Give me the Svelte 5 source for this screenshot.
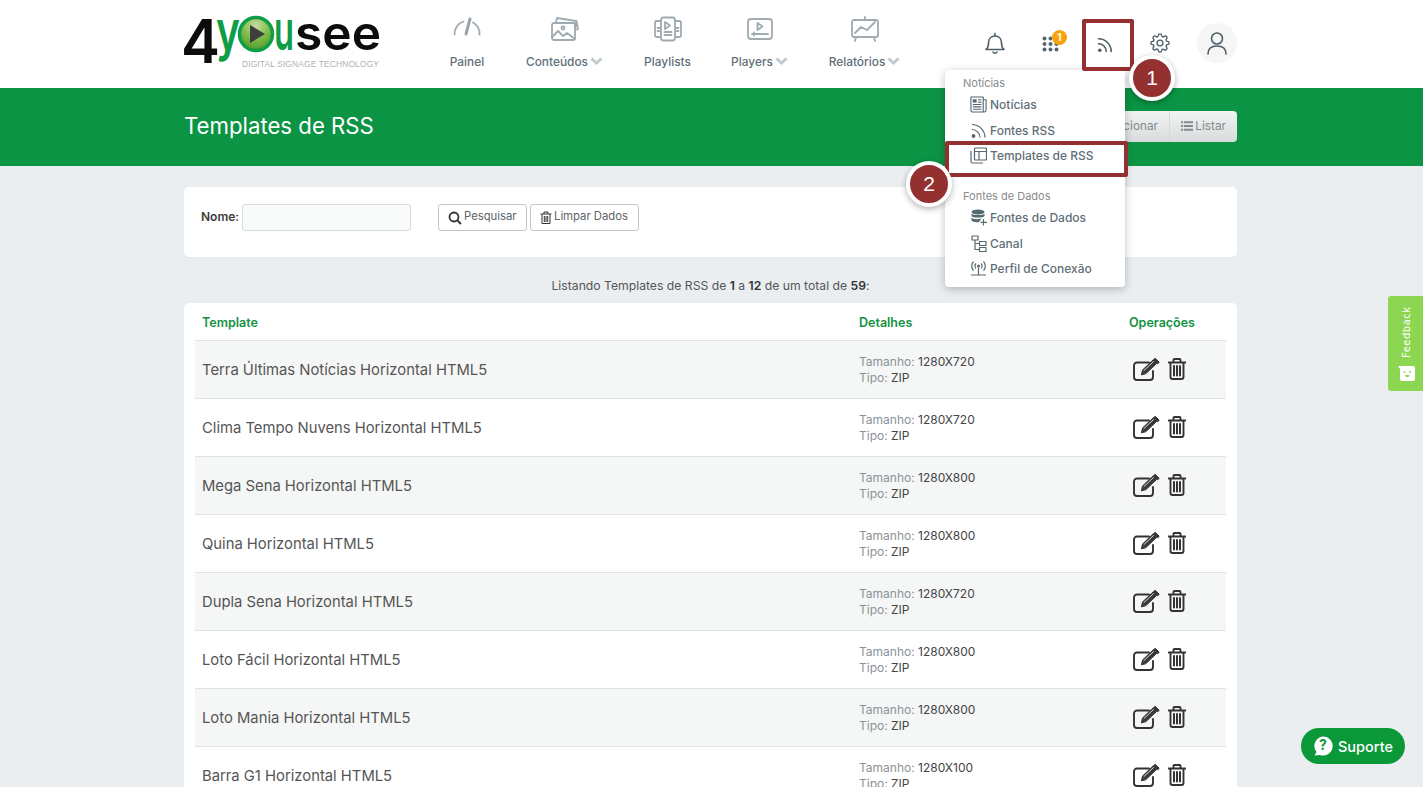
<script>
  const rows = [
    ['Terra Últimas Notícias Horizontal HTML5', '1280X720'],
    ['Clima Tempo Nuvens Horizontal HTML5', '1280X720'],
    ['Mega Sena Horizontal HTML5', '1280X800'],
    ['Quina Horizontal HTML5', '1280X800'],
    ['Dupla Sena Horizontal HTML5', '1280X720'],
    ['Loto Fácil Horizontal HTML5', '1280X800'],
    ['Loto Mania Horizontal HTML5', '1280X800'],
    ['Barra G1 Horizontal HTML5', '1280X100']
  ];
</script>

<div class="page">
  <header class="top">
    <div class="wrap top-in">
      <svg class="logo" width="198" height="56" viewBox="0 0 198 56" role="img" aria-label="4yousee">
        <defs>
          <radialGradient id="lg" cx="50%" cy="25%" r="75%">
            <stop offset="0" stop-color="#c4dfa2" />
            <stop offset="0.55" stop-color="#7dba45" />
            <stop offset="1" stop-color="#4f9a2c" />
          </radialGradient>
        </defs>
        <text x="-3" y="49" class="lt k" font-size="60" textLength="39" lengthAdjust="spacingAndGlyphs">4</text>
        <text x="32" y="36" class="lt g" font-size="55" textLength="24" lengthAdjust="spacingAndGlyphs">y</text>
        <circle cx="72" cy="20" r="16.500" fill="url(#lg)" stroke="#0f9d48" stroke-width="3.500" />
        <polygon points="66,11 66,29 81,20" fill="#3c3f3c" />
        <text x="90" y="36" class="lt g" font-size="55" textLength="20" lengthAdjust="spacingAndGlyphs">u</text>
        <text x="111" y="36" class="lt k" font-size="47" textLength="86" lengthAdjust="spacingAndGlyphs">see</text>
        <text x="58" y="53" class="tag" textLength="137" lengthAdjust="spacing">DIGITAL SIGNAGE TECHNOLOGY</text>
      </svg>

      <nav class="nav">
        <a class="ni">
          <svg class="nic" width="30" height="26" viewBox="0 0 30 26"><path d="M2.500 18.500a13 13 0 0 1 9-13M21 6.500a13 13 0 0 1 6.500 12" /><path class="fat" d="M14 18l4-15" /></svg>
          <span>Painel</span>
        </a>
        <a class="ni">
          <svg class="nic" width="30" height="26" viewBox="0 0 30 26"><rect x="2" y="7" width="23" height="17" rx="2" /><path d="M6 6l1-4 19 3-0.500 6M25 14l3-1-1.500-8M2 21l6-6 5 5 4-3 8 6" /><circle cx="13" cy="12" r="1.500" /></svg>
          <span>Conteúdos<svg class="chev" width="13" height="8" viewBox="0 0 13 8"><path d="M1.500 1.500l5 4.500 5-4.500" /></svg></span>
        </a>
        <a class="ni">
          <svg class="nic" width="30" height="26" viewBox="0 0 30 26"><rect x="8" y="1.500" width="14" height="23" rx="2.500" /><path d="M8 5H3.500a1.500 1.500 0 0 0-1.500 1.500v13A1.500 1.500 0 0 0 3.500 21H8M22 5h4.500A1.500 1.500 0 0 1 28 6.500v13a1.500 1.500 0 0 1-1.500 1.500H22M12 6v7l5-3.500zM11.500 16h7M11.500 19h7M4.500 12h2M4.500 15h2M23.500 12h2M23.500 15h2" /></svg>
          <span>Playlists</span>
        </a>
        <a class="ni">
          <svg class="nic" width="30" height="26" viewBox="0 0 30 26"><rect x="3" y="3" width="24" height="20" rx="3" /><path d="M12.500 7v7l5-3.500zM7 18h16M9 16.500v3" /></svg>
          <span>Players<svg class="chev" width="13" height="8" viewBox="0 0 13 8"><path d="M1.500 1.500l5 4.500 5-4.500" /></svg></span>
        </a>
        <a class="ni">
          <svg class="nic" width="30" height="26" viewBox="0 0 30 26"><rect x="2" y="4" width="26" height="17" rx="2" /><path d="M15 1v3M6 21l-1 4M24 21l1 4M5 17l6-6 6 3 8-8" /></svg>
          <span>Relatórios<svg class="chev" width="13" height="8" viewBox="0 0 13 8"><path d="M1.500 1.500l5 4.500 5-4.500" /></svg></span>
        </a>
      </nav>

      <div class="tools">
        <span class="tool">
          <svg width="22" height="24" viewBox="0 0 22 24"><path d="M2 18.500c2-1.500 2.500-3 2.500-6.500 0-4 2.500-7 6.500-7s6.500 3 6.500 7c0 3.500.5 5 2.500 6.500zM9 21a2.200 2.200 0 0 0 4 0M11 2.500V5" /></svg>
        </span>
        <span class="tool t2">
          <svg class="dots" width="18" height="16" viewBox="0 0 18 16"><g><circle cx="2.500" cy="2.500" r="2" /><circle cx="8.500" cy="2.500" r="2" /><circle cx="14.500" cy="2.500" r="2" /><circle cx="2.500" cy="8" r="2" /><circle cx="8.500" cy="8" r="2" /><circle cx="14.500" cy="8" r="2" /><circle cx="2.500" cy="13.500" r="2" /><circle cx="8.500" cy="13.500" r="2" /><circle cx="14.500" cy="13.500" r="2" /></g></svg>
          <b class="badge">1</b>
        </span>
        <span class="tool t3">
          <svg width="16" height="16" viewBox="0 0 16 16"><circle class="solid" cx="2.800" cy="13.200" r="1.800" /><path d="M1.500 6.800a7.700 7.700 0 0 1 7.700 7.700M1.500 1.800A12.700 12.700 0 0 1 14.200 14.500" /></svg>
        </span>
        <span class="tool t4">
          <svg width="20" height="20" viewBox="0 0 24 24"><circle cx="12" cy="12" r="3.500" /><path d="M19.400 15a1.700 1.700 0 0 0 .3 1.800l.1.100a2 2 0 1 1-2.900 2.900l-.1-.1a1.700 1.700 0 0 0-2.800 1.200V21a2 2 0 1 1-4 0v-.1a1.700 1.700 0 0 0-2.900-1.200l-.1.100a2 2 0 1 1-2.800-2.900l.1-.1a1.700 1.700 0 0 0-1.200-2.800H3a2 2 0 1 1 0-4h.1a1.700 1.700 0 0 0 1.200-2.900l-.1-.1a2 2 0 1 1 2.900-2.800l.1.100a1.700 1.700 0 0 0 1.800.3H9a1.700 1.700 0 0 0 1-1.500V3a2 2 0 1 1 4 0v.1a1.700 1.700 0 0 0 2.900 1.200l.1-.1a2 2 0 1 1 2.800 2.900l-.1.100a1.700 1.700 0 0 0-.3 1.800V9a1.700 1.700 0 0 0 1.500 1H21a2 2 0 1 1 0 4h-.1a1.700 1.700 0 0 0-1.500 1z" /></svg>
        </span>
        <span class="tool t5 avatar">
          <svg width="22" height="24" viewBox="0 0 22 24"><circle cx="11" cy="7.500" r="5.500" /><path d="M2 23c0-5 3-8 9-8s9 3 9 8" /></svg>
        </span>
      </div>
    </div>
  </header>

  <section class="band">
    <div class="wrap band-in">
      <h1>Templates de RSS</h1>
      <div class="btns">
        <span class="bt">Adicionar</span>
        <span class="bt">
          <svg width="13" height="10" viewBox="0 0 13 10"><path d="M0 1h2M3 1h10M0 5h2M3 5h10M0 9h2M3 9h10" /></svg>Listar
        </span>
      </div>
    </div>
  </section>

  <main class="wrap">
    <form class="card search">
      <label for="n">Nome:</label>
      <input id="n" type="text" />
      <button type="button" class="b b1">
        <svg width="14" height="14" viewBox="0 0 14 14"><circle cx="6" cy="6" r="4.500" /><path d="M9.500 9.500L13 13" /></svg>Pesquisar
      </button>
      <button type="button" class="b">
        <svg width="12" height="13" viewBox="0 0 12 13"><path d="M0.500 3h11M4 3V1h4v2M2 3v9.500h8V3M4.300 5v6M6 5v6M7.700 5v6" /></svg>Limpar Dados
      </button>
    </form>

    <p class="count">Listando Templates de RSS de <b>1</b> a <b>12</b> de um total de <b>59</b>:</p>

    <section class="card list">
      <table>
        <thead>
          <tr><th class="c1">Template</th><th class="c2">Detalhes</th><th class="c3">Operações</th></tr>
        </thead>
        <tbody>
          {#each rows as r}
            <tr>
              <td class="name">{r[0]}</td>
              <td class="det"><span>Tamanho:</span> {r[1]}<br /><span>Tipo:</span> ZIP</td>
              <td class="ops">
                <svg class="op" width="27" height="23" viewBox="0 0 27 23"><path d="M16 4.500H4a3 3 0 0 0-3 3v11.500a3 3 0 0 0 3 3h13a3 3 0 0 0 3-3v-6" /><path class="pen" d="M8.500 16.500l1-4.500L20 2l3.500 3.500-10.500 10z" /><path class="gap" d="M11 12.500l9.500-9" /><path class="pen" d="M21.500 0.800l1-.3 3.500 3.500-.3 1-1 .8-4-4z" /></svg>
                <svg class="op" width="18" height="22" viewBox="0 0 18 22"><path d="M0.500 4.500h17M5.500 4.500V2a1 1 0 0 1 1-1h5a1 1 0 0 1 1 1v2.500M2.500 4.500V19a2 2 0 0 0 2 2h9a2 2 0 0 0 2-2V4.500" /><path class="bars" d="M6 8v9.500M9 8v9.500M12 8v9.500" /></svg>
              </td>
            </tr>
          {/each}
        </tbody>
      </table>
    </section>
  </main>

  <div class="menu">
    <div class="mh">Notícias</div>
    <a class="mi m1"><svg viewBox="0 0 18 18"><path d="M1 1h13v16H3a2 2 0 0 1-2-2zM14 4h3v11a2 2 0 0 1-2 2h-1M8.500 4H12M8.500 6.500H12M3 9h9M3 11.500h9M3 14h9" /><rect class="solid" x="3" y="3.500" width="4" height="3.500" /></svg>Notícias</a>
    <a class="mi m2"><svg viewBox="0 0 17 17"><circle class="solid" cx="3.500" cy="14" r="1.900" /><path d="M2 7.500A8 8 0 0 1 10 15.500M2 2.500A13 13 0 0 1 15 15.500" /></svg>Fontes RSS</a>
    <a class="mi m3"><svg viewBox="0 0 17 17"><rect x="4.500" y="1" width="12" height="12" rx="1" /><path d="M4.500 4.500h12M9 4.500V13M1 4v10.500A1.500 1.500 0 0 0 2.500 16H13" /></svg>Templates de RSS</a>
    <div class="mh h2">Fontes de Dados</div>
    <a class="mi m4"><svg viewBox="0 0 17 17"><ellipse class="solid" cx="8" cy="3" rx="6.500" ry="2.500" /><path class="solid" d="M1.500 4.500c1 2 12 2 13 0v2.500c-1 2-12 2-13 0zM1.500 8.500c1 2 8 2 10 1L9 13c-3 .5-6.500 0-7.500-1.500z" /><path d="M13.500 10v6.500M10.500 13.300h6.500" /></svg>Fontes de Dados</a>
    <a class="mi m5"><svg viewBox="0 0 17 17"><rect x="2" y="1" width="6" height="4" /><rect x="9.500" y="6.500" width="6.500" height="4" /><rect x="9.500" y="12.500" width="6.500" height="4" /><path d="M5 5v9.500h4.500M5 8.500h4.500" /></svg>Canal</a>
    <a class="mi m6"><svg viewBox="0 0 17 17"><circle class="solid" cx="8.500" cy="6" r="1.500" /><path d="M6 3.500a3.500 3.500 0 0 0 0 5M11 3.500a3.500 3.500 0 0 1 0 5M3.500 1.500a6.500 6.500 0 0 0 0 9M13.500 1.500a6.500 6.500 0 0 1 0 9M8.500 7.500v7M1 15h15" /></svg>Perfil de Conexão</a>
  </div>

  <div class="hl hl1"></div>
  <div class="hl hl2"></div>
  <div class="dot d1">1</div>
  <div class="dot d2">2</div>

  <aside class="fb">
    <span>Feedback</span>
    <svg width="17" height="15" viewBox="0 0 17 15"><path class="face" d="M0 0h15a2 2 0 0 1 2 2v11a2 2 0 0 1-2 2H4a2 2 0 0 1-2-2V3z" /><circle class="eye" cx="6.500" cy="6" r="1" /><circle class="eye" cx="12" cy="6" r="1" /><path class="eye" d="M7 9h4.500a2.200 2.200 0 0 1-4.500 0z" /></svg>
  </aside>

  <a class="sup">
    <svg width="20" height="20" viewBox="0 0 20 20"><path class="q" d="M10 0.500a9.500 9.500 0 1 1-3.200 18.400L1.500 19.500l2-3.600A9.500 9.500 0 0 1 10 0.500z" /></svg>
    <i>?</i>
    Suporte
  </a>
</div>

<style>
  :global(html), :global(body) { margin: 0; height: 787px; overflow: hidden; }
  :global(body) { background: #eaeef1; }
  * { box-sizing: border-box; }
  .page { position: relative; width: 1423px; height: 787px; overflow: hidden; font-family: Inter, "Liberation Sans", sans-serif; color: #555; background: #eaeef1; }
  .wrap { width: 1053px; margin-left: 184px; }

  .top { height: 88px; background: #fff; }
  .top-in { display: flex; height: 88px; position: relative; }
  .logo { margin-top: 14px; flex: none; }
  .lt { font-family: Inter, sans-serif; font-weight: 600; }
  .k { fill: #0c0c0c; }
  .g { fill: #0f9d48; }
  .tag { font-family: "Liberation Sans", sans-serif; font-size: 8.500px; fill: #b0b3b3; }

  .nav { display: grid; grid-template-columns: 36px 79px 47px 57px 73px; column-gap: 40px; margin-left: 67px; margin-top: 16px; align-items: start; }
  .ni { display: flex; flex-direction: column; align-items: center; color: #5f6f7a; font-size: 11.900px; font-weight: 500; white-space: nowrap; }
  .ni span { margin-top: 12px; display: flex; align-items: center; gap: 2px; }
  .nic { fill: none; stroke: #9fabb1; stroke-width: 1.800; stroke-linecap: round; stroke-linejoin: round; }
  .nic .fat { stroke-width: 3; stroke: #97a4aa; }
  .chev { fill: none; stroke: #c3cbcf; stroke-width: 3; margin-top: -2px; }

  .tools { margin-left: auto; display: flex; align-items: flex-start; padding-top: 23px; }
  .tool { width: 40px; height: 40px; display: flex; align-items: center; justify-content: center; position: relative; }
  .tool svg { fill: none; stroke: #4d5e66; stroke-width: 1.600; stroke-linecap: round; stroke-linejoin: round; }
  .tool .dots { fill: #56666f; stroke: none; margin: 1px 0 0 3px; }
  .tool .solid { fill: #4d5e66; stroke: none; }
  .t2 { margin-left: 14px; }
  .t3 { margin-left: 16px; }
  .t3 svg { margin-top: 3px; }
  .t4 { margin-left: 15px; }
  .t5 { margin-left: 17px; }
  .avatar { background: #f6f6f6; border-radius: 50%; }
  .badge { position: absolute; left: 23px; top: 7px; width: 15px; height: 15px; border-radius: 50%; background: #f9a30a; color: #fff; font-size: 10px; font-weight: 700; text-align: center; line-height: 15px; }

  .band { height: 78px; background: #0b9444; }
  .band-in { display: flex; justify-content: space-between; align-items: center; height: 78px; }
  h1 { margin: 0 0 3px; font-size: 22.200px; font-weight: 400; color: #fff; }
  .btns { display: flex; height: 31px; margin-top: -2px; border-radius: 4px; overflow: hidden; background: linear-gradient(#f2f3f3, #d9dcdc); }
  .bt { display: flex; align-items: center; gap: 2px; color: #7f8b90; font-size: 11.800px; padding: 0 11px; }
  .bt + .bt { border-left: 1px solid #d5d8d8; width: 68px; }
  .bt svg { fill: none; stroke: #7f8b90; stroke-width: 2; }

  .card { background: #fff; border-radius: 5px; }
  .search { margin-top: 21px; height: 70px; display: flex; align-items: flex-start; padding: 17px 0 0 17px; box-shadow: 0 1px 2px rgba(0,0,0,.03); }
  label { font-size: 12px; font-weight: 600; color: #3c3c3c; line-height: 25px; width: 41px; }
  input { width: 169px; height: 27px; background: #f9fafa; border: 1px solid #d6dbdc; border-radius: 3px; margin: 0 27px 0 0; }
  .b { height: 27px; display: flex; align-items: center; gap: 2px; background: #fff; border: 1px solid #c2c6c8; border-radius: 3px; padding: 0 0 3px 9px; font: 400 11.300px Inter, sans-serif; color: #5a646a; width: 109px; white-space: nowrap; }
  .b1 { width: 89px; margin-right: 3px; }
  .b svg { fill: none; stroke: #333; stroke-width: 1; margin-top: 3px; }
  .b1 svg { stroke-width: 1.800; }

  .count { margin: 21px 0 10px; text-align: center; font-size: 12.200px; line-height: 15px; color: #555; height: 15px; }
  .count b { font-weight: 600; color: #333; }

  .list { padding: 0 11px; height: 600px; }
  table { width: 1031px; border-collapse: collapse; table-layout: fixed; }
  th { height: 37px; text-align: left; padding: 2px 0 0 7px; font-size: 12.500px; font-weight: 600; color: #12923f; border-bottom: 1px solid #dfe3e3; }
  .c1 { width: 657px; }
  .c2 { width: 270px; }
  .c3 { width: 104px; }
  td { height: 58px; padding: 0 0 0 7px; border-bottom: 1px solid #dfe3e3; }
  tbody tr:nth-child(odd) { background: #f5f7f6; }
  .name { font-size: 14.800px; color: #555; font-weight: 400; padding-top: 2px; }
  .det { font-size: 12px; line-height: 16px; color: #444; padding-top: 2px; }
  .det span { color: #8a9298; }
  .ops { padding-left: 11px; white-space: nowrap; font-size: 0; }
  .op { fill: none; stroke: #333; stroke-width: 1.900; stroke-linejoin: round; stroke-linecap: round; vertical-align: middle; margin-right: 8px; }
  .op .pen { fill: #3a3a3a; stroke-width: 1; }
  .op .gap { stroke: #fff; stroke-width: 0.800; }
  .op .bars { stroke-width: 2; }

  .menu { position: absolute; left: 945px; top: 70px; width: 180px; height: 217px; background: #fff; border-radius: 4px; box-shadow: 0 2px 8px rgba(0,0,0,.25); }
  .mh { position: absolute; left: 18px; top: 6px; font-size: 11px; color: #8a8a8a; line-height: 15px; }
  .mh.h2 { top: 119px; }
  .mi { position: absolute; left: 25px; width: 150px; height: 20px; display: flex; align-items: center; font-size: 12px; font-weight: 500; color: #5f6f78; white-space: nowrap; }
  .mi svg { width: 17px; height: 17px; margin: 0 3px 0 0; flex: none; fill: none; stroke: #55696f; stroke-width: 1.200; stroke-linejoin: round; }
  .mi .solid { fill: #55696f; stroke: none; }
  .m1 { top: 24px; }
  .m2 { top: 50px; }
  .m3 { top: 75px; }
  .m4 { top: 137px; }
  .m5 { top: 163px; }
  .m6 { top: 188px; }

  .hl { position: absolute; border: 4px solid #943130; border-radius: 2px; }
  .hl1 { left: 1082px; top: 19px; width: 52px; height: 52px; }
  .hl2 { left: 945px; top: 141px; width: 183px; height: 36px; }
  .dot { position: absolute; width: 46px; height: 46px; border-radius: 50%; background: #943130; border: 4px solid #fff; box-shadow: 0 2px 6px rgba(0,0,0,.3); color: #fff; font: 400 21px/38px "Liberation Sans", sans-serif; text-align: center; }
  .d1 { left: 1129px; top: 55px; }
  .d2 { left: 906px; top: 161px; }

  .fb { position: absolute; left: 1388px; top: 296px; width: 35px; height: 95px; background: #8cd651; border-radius: 3px 0 0 3px; display: flex; flex-direction: column; align-items: center; padding: 10px 0 0 0; }
  .fb span { writing-mode: vertical-rl; transform: rotate(180deg); color: #fff; font: 400 10px "DejaVu Sans", sans-serif; letter-spacing: 0.500px; height: 52px; text-align: left; margin-left: 2px; }
  .fb svg { margin-top: 8px; margin-left: 2px; }
  .face { fill: #fff; }
  .eye { fill: #8cd651; }

  .sup { position: absolute; left: 1301px; top: 728px; width: 104px; height: 36px; border-radius: 18px; background: #0a9838; color: #fff; display: flex; align-items: center; padding-left: 12px; gap: 5px; font-size: 14.500px; font-weight: 500; }
  .q { fill: #fff; }
  .sup i { position: absolute; left: 12px; top: 8px; width: 20px; text-align: center; font: 700 14px/18px Inter, sans-serif; color: #0a9838; }
</style>
